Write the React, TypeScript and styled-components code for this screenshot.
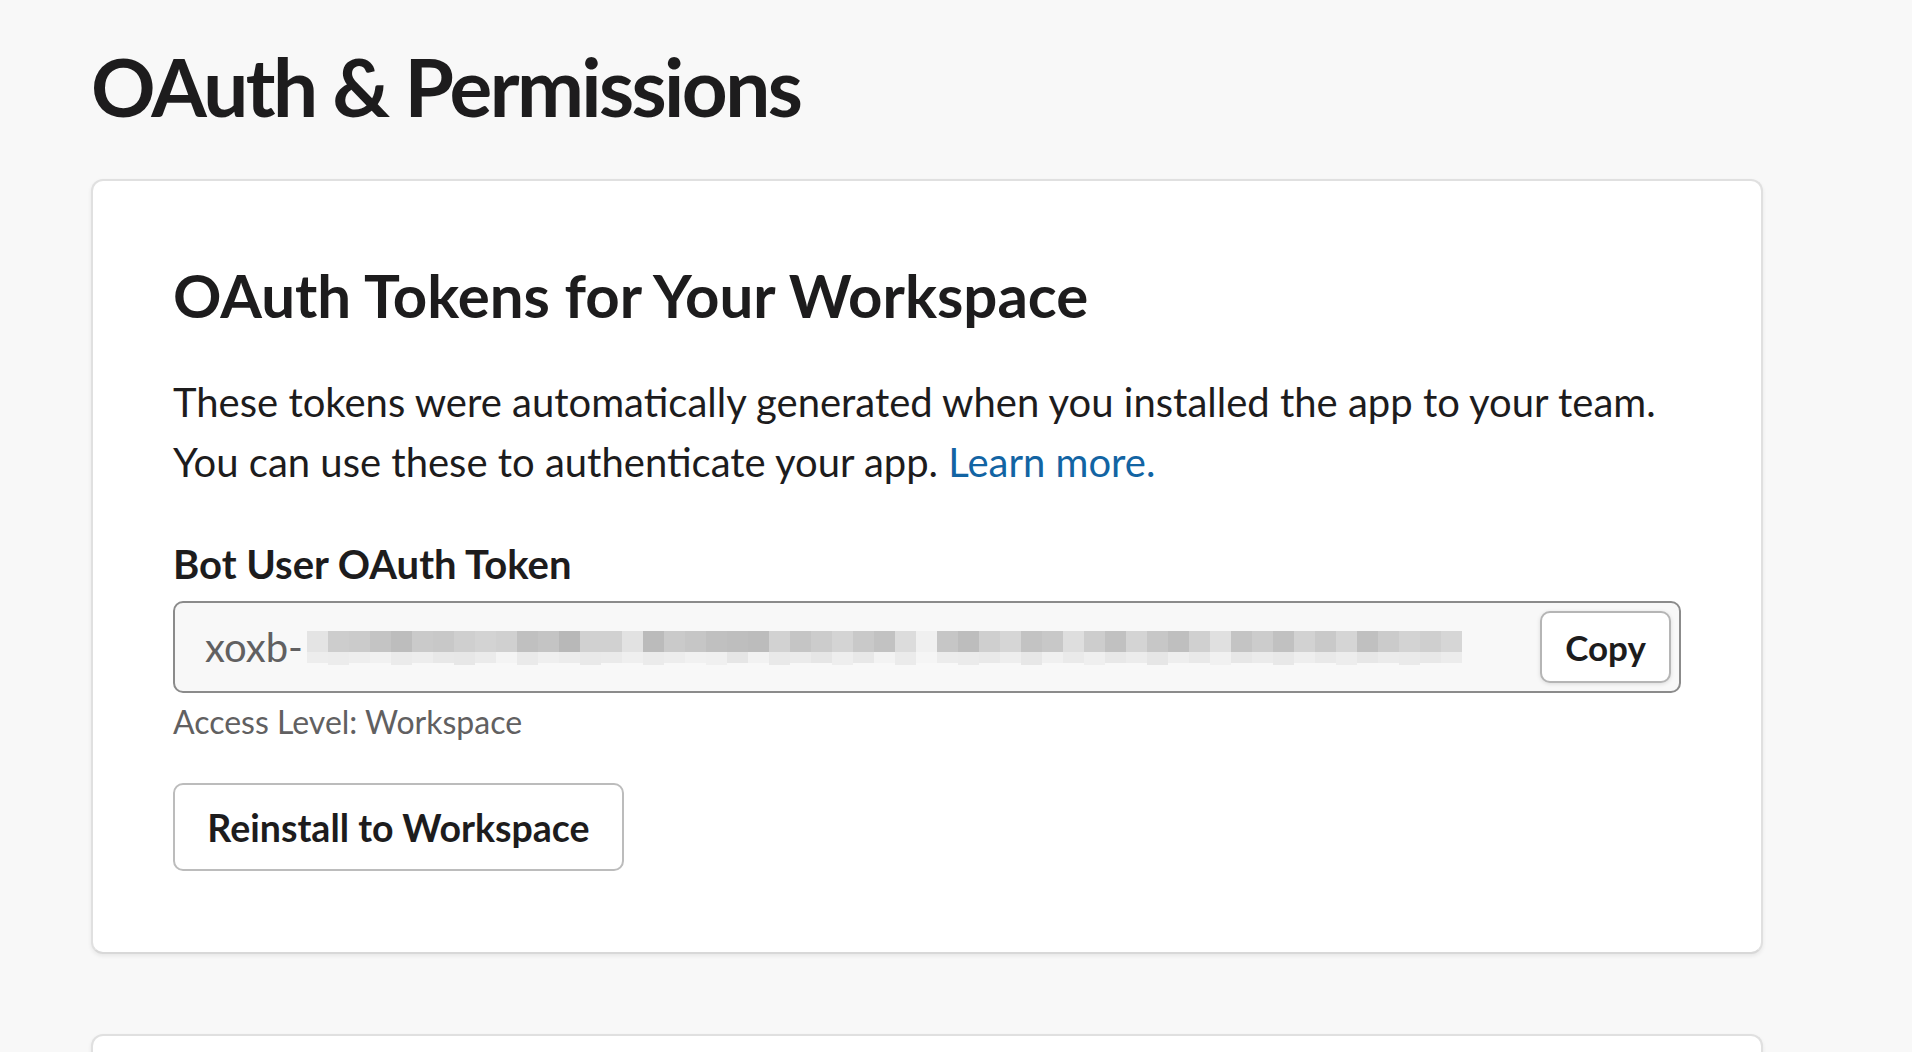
import React from 'react';
import styled, { createGlobalStyle } from 'styled-components';

const GlobalStyle = createGlobalStyle`
	html,
	body {
		margin: 0;
		padding: 0;
		background: #f8f8f8;
		font-family: Lato, 'Noto Sans', sans-serif;
		color: #1d1c1d;
	}
`;

const Page = styled.div`
	padding: 38px 0 0 91px;
	height: 1052px;
	box-sizing: border-box;
	overflow: hidden;
`;

const PageTitle = styled.h1`
	margin: 0 0 45px;
	font-size: 80px;
	line-height: 96px;
	font-weight: 700;
	letter-spacing: -2.6px;
`;

const Card = styled.section`
	width: 1672px;
	box-sizing: border-box;
	background: #fff;
	border: 2px solid #e0e0e0;
	border-bottom-color: #d8d8d8;
	border-radius: 12px;
	box-shadow: 0 2px 4px rgba(0, 0, 0, 0.07);
	padding: 78px 80px 81px;
	margin-bottom: 80px;
`;

const CardTitle = styled.h2`
	margin: 0 0 41px;
	font-size: 60px;
	line-height: 72px;
	font-weight: 700;
`;

const Text = styled.p`
	margin: 0 0 48px;
	font-size: 40px;
	line-height: 60px;
`;

const Link = styled.a`
	color: #1264a3;
	text-decoration: none;
`;

const Label = styled.div`
	font-size: 40px;
	line-height: 48px;
	font-weight: 700;
	margin-bottom: 13px;
`;

const TokenField = styled.div`
	height: 92px;
	width: 1508px;
	box-sizing: border-box;
	display: flex;
	align-items: center;
	padding: 0 8px 0 30px;
	background: #f8f8f8;
	border: 2px solid #8b8b8b;
	border-radius: 10px;
`;

const TokenText = styled.span`
	font-size: 40px;
	color: #616061;
	display: flex;
	align-items: center;
	flex: 1;
`;

const Button = styled.button<{ $size?: 'small' | 'large' }>`
	font-family: Lato, 'Noto Sans', sans-serif;
	font-weight: 700;
	color: #1d1c1d;
	background: #fff;
	border: 2px solid ${(p) => (p.$size === 'small' ? '#b5b5b5' : '#bcbcbc')};
	border-radius: 10px;
	cursor: pointer;
	box-sizing: border-box;
	height: ${(p) => (p.$size === 'small' ? '72px' : '88px')};
	width: ${(p) => (p.$size === 'small' ? '131px' : '451px')};
	font-size: ${(p) => (p.$size === 'small' ? '35px' : '37.5px')};
	box-shadow: ${(p) =>
		p.$size === 'small' ? '0 1px 4px rgba(0, 0, 0, 0.12)' : 'none'};
	padding: 0;
`;

const Hint = styled.div`
	font-size: 32px;
	line-height: 38px;
	color: #616061;
	margin: 10px 0 42px;
`;

const upper = [
	'#e4e4e4', '#cdcdcd', '#cbcbcb', '#c4c4c4', '#bdbdbd', '#cacaca', '#c8c8c8', '#cfcfcf',
	'#d3d3d3', '#d0d0d0', '#c0c0c0', '#c4c4c4', '#b8b8b8', '#d1d1d1', '#d1d1d1', '#e2e2e2',
	'#bbbbbb', '#cacaca', '#c6c6c6', '#c0c0c0', '#bebebe', '#bcbcbc', '#d2d2d2', '#c5c5c5',
	'#cccccc', '#d4d4d4', '#c9c9c9', '#c2c2c2', '#dcdcdc', '#f0f0f0', '#c6c6c6', '#bdbdbd',
	'#cfcfcf', '#d6d6d6', '#c3c3c3', '#c8c8c8', '#dedede', '#cdcdcd', '#c1c1c1', '#d4d4d4',
	'#c7c7c7', '#bfbfbf', '#d0d0d0', '#e0e0e0', '#c4c4c4', '#cccccc', '#c1c1c1', '#d2d2d2',
	'#c9c9c9', '#d5d5d5', '#c0c0c0', '#cbcbcb', '#d3d3d3', '#cfcfcf', '#d6d6d6',
];
const lower = [
	'#ededed', '#ececec', '#eeeeee', '#f1f1f1', '#ebebeb', '#ededed', '#e8e8e8', '#e7e7e7',
	'#ebebeb', '#f4f4f4', '#eaeaea', '#efefef', '#ececec', '#e9e9e9', '#eaeaea', '#efefef',
	'#ebebeb', '#ededed', '#f1f1f1', '#f0f0f0', '#e6e6e6', '#f2f2f2', '#e9e9e9', '#ebebeb',
	'#e6e6e6', '#eeeeee', '#e8e8e8', '#f3f3f3', '#ebebeb', '#f5f5f5', '#ececec', '#ebebeb',
	'#e9e9e9', '#eeeeee', '#e7e7e7', '#f0f0f0', '#eaeaea', '#efefef', '#e8e8e8', '#ececec',
	'#e6e6e6', '#eeeeee', '#e9e9e9', '#f1f1f1', '#e7e7e7', '#ebebeb', '#e8e8e8', '#eeeeee',
	'#e9e9e9', '#ededed', '#e7e7e7', '#ebebeb', '#eaeaea', '#e8e8e8', '#ececec',
];

// pixelated, redacted remainder of the token
function TokenMask() {
	const w = 21;
	return (
		<svg width={upper.length * w} height={36} style={{ display: 'block', marginLeft: 4 }}>
			{upper.map((c, i) => (
				<rect key={'u' + i} x={i * w} y={2} width={w} height={21} fill={c} />
			))}
			{lower.map((c, i) => (
				<rect key={'l' + i} x={i * w} y={23} width={w} height={i % 3 === 1 ? 14 : 11} fill={c} />
			))}
		</svg>
	);
}

export default function App() {
	return (
		<>
			<GlobalStyle />
			<Page>
				<PageTitle>OAuth &amp; Permissions</PageTitle>
				<Card>
					<CardTitle>OAuth Tokens for Your Workspace</CardTitle>
					<Text>
						These tokens were automatically generated when you installed the app to your team.
						<br />
						You can use these to authenticate your app. <Link href="#">Learn more.</Link>
					</Text>
					<Label>Bot User OAuth Token</Label>
					<TokenField>
						<TokenText>
							xoxb-
							<TokenMask />
						</TokenText>
						<Button $size="small">Copy</Button>
					</TokenField>
					<Hint>Access Level: Workspace</Hint>
					<Button $size="large">Reinstall to Workspace</Button>
				</Card>
				<Card />
			</Page>
		</>
	);
}
